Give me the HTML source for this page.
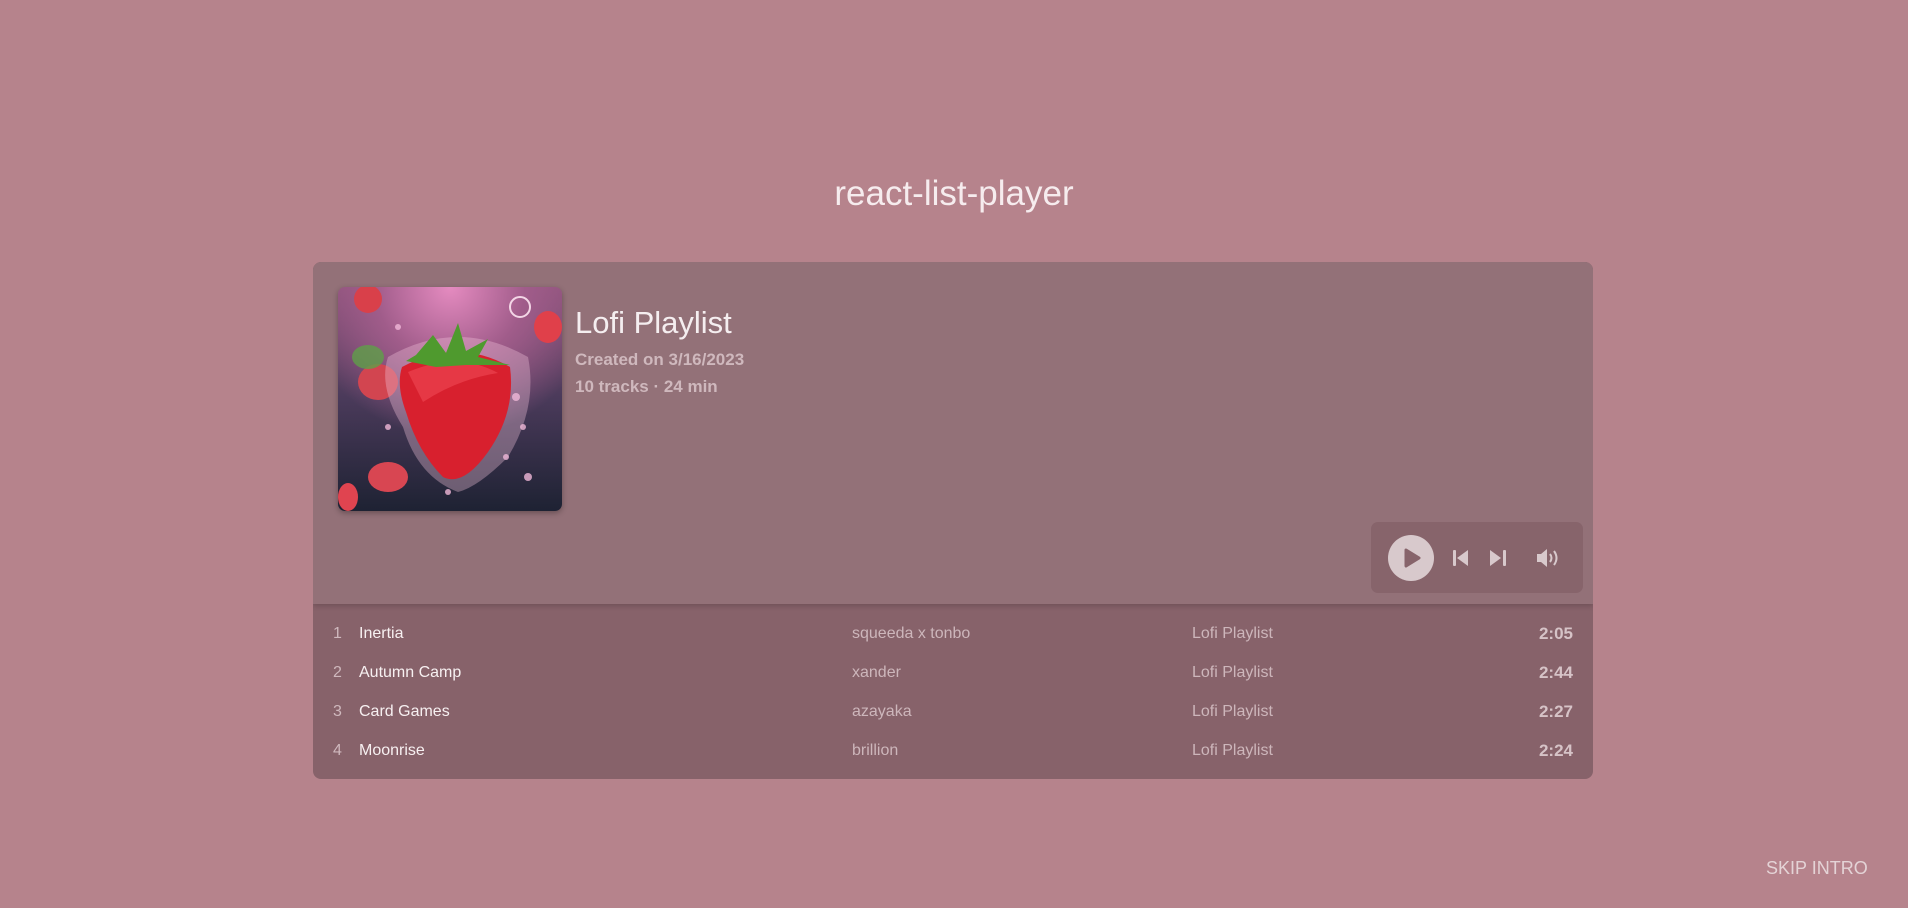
<!DOCTYPE html>
<html><head><meta charset="utf-8"><style>
*{margin:0;padding:0;box-sizing:border-box}
body{width:1908px;height:908px;background:#b6838c;font-family:"Liberation Sans",sans-serif;position:relative;overflow:hidden}
h1{position:absolute;left:0;width:1908px;top:174px;text-align:center;color:#f6ecee;font-weight:normal;font-size:35px}
.card{position:absolute;left:313px;top:262px;width:1280px;height:517px;border-radius:8px;overflow:hidden;background:#87626a}
.head{position:absolute;left:0;top:0;width:1280px;height:342px;background:#937178;box-shadow:0 2px 5px rgba(0,0,0,.18)}
.art{position:absolute;left:25px;top:25px;width:224px;height:224px;border-radius:7px;overflow:hidden;box-shadow:0 2px 6px rgba(0,0,0,.3);
background:radial-gradient(circle at 50% 0%,#e58bc0 0%,#a05c8a 30%,transparent 60%),linear-gradient(180deg,#8a5278 0%,#4a3a5a 50%,#1e2233 100%)}
.t1{position:absolute;left:262px;top:43px;font-size:31px;color:#f5eef0}
.t2{position:absolute;left:262px;top:84px;font-size:17px;font-weight:bold;color:#cfb8bd;line-height:27px}
.ctl{position:absolute;left:1058px;top:260px;width:212px;height:71px;border-radius:7px;background:#87646b}
.row{position:absolute;left:0;width:1280px;height:39px;font-size:16px;line-height:39px}
.row span{position:absolute}
.n{left:20px;color:#cfb8bd}.ti{left:46px;color:#f7f0f1}.ar{left:539px;color:#cdb6bb}.al{left:879px;color:#cdb6bb}.d{right:20px;color:#d6c3c7;font-weight:bold;font-size:17px}
.skip{position:absolute;left:1766px;top:858px;color:#e4d3d6;font-size:18px}
</style></head><body>
<h1>react-list-player</h1>
<div class="card">
<div class="head">
<div class="art"><svg width="224" height="224">
<circle cx="30" cy="12" r="14" fill="#d9404a"/><circle cx="182" cy="20" r="10" fill="none" stroke="#f3d6e6" stroke-width="2"/>
<ellipse cx="210" cy="40" rx="14" ry="16" fill="#e0404a"/><ellipse cx="40" cy="95" rx="20" ry="18" fill="#d24550"/>
<ellipse cx="30" cy="70" rx="16" ry="12" fill="#5f9f48" opacity=".8"/>
<ellipse cx="50" cy="190" rx="20" ry="15" fill="#d84652"/><ellipse cx="10" cy="210" rx="10" ry="14" fill="#e04450"/>
<path d="M50 70 Q120 30 190 70 Q200 120 170 170 Q140 200 120 205 Q80 190 65 140 Q40 100 50 70Z" fill="#f3c7dc" opacity=".35"/>
<path d="M64 80 Q120 50 172 80 Q178 125 150 165 Q125 200 105 190 Q80 165 68 125 Q58 98 64 80Z" fill="#d8202e"/>
<path d="M70 85 Q120 64 160 86 Q120 92 85 115Z" fill="#f04a55" opacity=".6"/>
<path d="M78 68 L95 48 L108 66 L120 36 L128 64 L150 52 L140 70 L172 78 L128 78 L98 80 L68 74Z" fill="#4f9a2e"/>
<g fill="#f0b8d8" opacity=".8"><circle cx="60" cy="40" r="3"/><circle cx="178" cy="110" r="4"/><circle cx="185" cy="140" r="3"/><circle cx="168" cy="170" r="3"/><circle cx="50" cy="140" r="3"/><circle cx="190" cy="190" r="4"/><circle cx="110" cy="205" r="3"/></g>
</svg></div>
<div class="t1">Lofi Playlist</div>
<div class="t2">Created on 3/16/2023<br>10 tracks · 24 min</div>
<div class="ctl"><svg width="212" height="71">
<circle cx="40" cy="36" r="23" fill="#d8c9cc"/>
<path d="M35 28 L48 36 L35 44Z" fill="#87646b" stroke="#87646b" stroke-width="3" stroke-linejoin="round"/>
<rect x="82" y="28" width="3" height="16" rx="1" fill="#d8c9cc"/><path d="M97 28 L86 36 L97 44Z" fill="#d8c9cc"/>
<rect x="132" y="28" width="3" height="16" rx="1" fill="#d8c9cc"/><path d="M119 28 L130 36 L119 44Z" fill="#d8c9cc"/>
<path d="M166 32 L170 32 L176 27 L176 45 L170 40 L166 40Z" fill="#d8c9cc"/>
<path d="M179 32 Q182 36 179 40 M183 29 Q188 36 183 43" stroke="#d8c9cc" stroke-width="2" fill="none"/>
</svg></div>
</div>
<div class="row" style="top:352px"><span class="n">1</span><span class="ti">Inertia</span><span class="ar">squeeda x tonbo</span><span class="al">Lofi Playlist</span><span class="d">2:05</span></div>
<div class="row" style="top:391px"><span class="n">2</span><span class="ti">Autumn Camp</span><span class="ar">xander</span><span class="al">Lofi Playlist</span><span class="d">2:44</span></div>
<div class="row" style="top:430px"><span class="n">3</span><span class="ti">Card Games</span><span class="ar">azayaka</span><span class="al">Lofi Playlist</span><span class="d">2:27</span></div>
<div class="row" style="top:469px"><span class="n">4</span><span class="ti">Moonrise</span><span class="ar">brillion</span><span class="al">Lofi Playlist</span><span class="d">2:24</span></div>
</div>
<div class="skip">SKIP INTRO</div>
</body></html>
